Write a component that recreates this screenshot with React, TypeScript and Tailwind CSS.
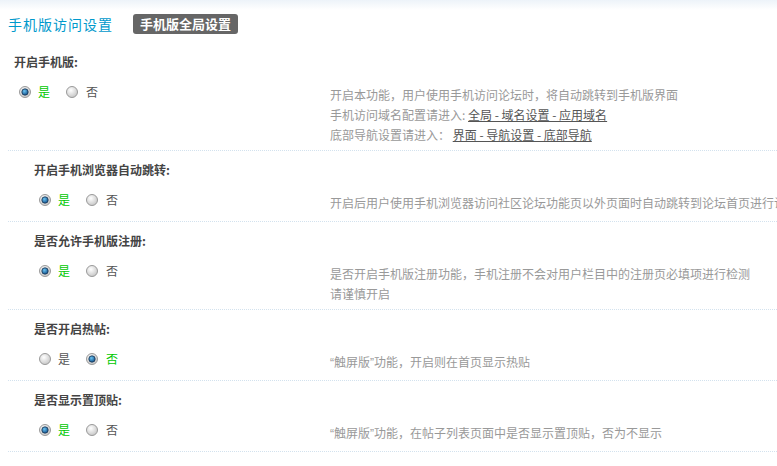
/* eslint-disable */
import React from 'react'

function Radio({ on }: { on: boolean }) {
  return (
    <svg width="12" height="12" viewBox="0 0 12 12" className="shrink-0">
      <defs>
        <radialGradient id="rg-off" cx="40%" cy="35%" r="70%">
          <stop offset="0%" stopColor="#ffffff" />
          <stop offset="100%" stopColor="#c4c4c4" />
        </radialGradient>
        <radialGradient id="rg-on" cx="40%" cy="35%" r="70%">
          <stop offset="0%" stopColor="#6cc4f2" />
          <stop offset="100%" stopColor="#0a4a86" />
        </radialGradient>
      </defs>
      <circle cx="6" cy="6" r="5.5" fill="url(#rg-off)" stroke="#9a9a9a" strokeWidth="1" />
      {on && <circle cx="6" cy="6" r="3.2" fill="url(#rg-on)" stroke="#1c3550" strokeWidth="0.8" />}
    </svg>
  )
}

function YesNo({ yes }: { yes: boolean }) {
  return (
    <div className="flex items-center h-[14px]">
      <Radio on={yes} />
      <span className={`ml-[7px] w-[12px] ${yes ? 'text-[#00c800]' : 'text-[#555]'}`}>是</span>
      <span className="ml-[16px]"><Radio on={!yes} /></span>
      <span className={`ml-[8px] ${!yes ? 'text-[#00c800]' : 'text-[#555]'}`}>否</span>
    </div>
  )
}

const L = ({ children }: { children: React.ReactNode }) => <a className="text-[#555] underline">{children}</a>
const Q = ({ children }: { children: React.ReactNode }) => <span className="font-['Liberation_Sans']">{children}</span>

const rows: { label: string; sub: boolean; yes: boolean; tips: React.ReactNode[] }[] = [
  {
    label: '开启手机版:', sub: false, yes: true,
    tips: [
      '开启本功能，用户使用手机访问论坛时，将自动跳转到手机版界面',
      <>手机访问域名配置请进入: <L>全局 - 域名设置 - 应用域名</L></>,
      <>底部导航设置请进入： <L>界面 - 导航设置 - 底部导航</L></>,
    ],
  },
  { label: '开启手机浏览器自动跳转:', sub: true, yes: true, tips: ['开启后用户使用手机浏览器访问社区论坛功能页以外页面时自动跳转到论坛首页进行访问'] },
  { label: '是否允许手机版注册:', sub: true, yes: true, tips: ['是否开启手机版注册功能，手机注册不会对用户栏目中的注册页必填项进行检测', '请谨慎开启'] },
  { label: '是否开启热帖:', sub: true, yes: false, tips: [<><Q>“</Q>触屏版<Q>”</Q>功能，开启则在首页显示热贴</>] },
  { label: '是否显示置顶贴:', sub: true, yes: true, tips: [<><Q>“</Q>触屏版<Q>”</Q>功能，在帖子列表页面中是否显示置顶贴，否为不显示</>] },
]

export default function App() {
  return (
    <div className="w-[777px] h-[466px] overflow-hidden bg-white text-[12px] text-[#444] bg-gradient-to-b from-[#edf3f9] to-white to-[10px]" style={{ fontFamily: '"Noto Sans CJK SC", "Liberation Sans", sans-serif' }}>
      <div className="pl-[8px]">
        <div className="h-[44px] pt-[14px] flex items-start">
          <h3 className="text-[14px] leading-[20px] text-[#0099cc] tracking-[1px]">手机版访问设置</h3>
          <span className="ml-[20px] h-[20px] px-[7px] rounded-[3px] bg-[#666] text-white font-bold text-[13px] leading-[20px]">手机版全局设置</span>
        </div>
        {rows.map((r, i) => (
          <div key={i} className="border-b border-dotted border-[#d3e2ee]">
            <div className={`${i === 0 ? 'pt-[7px]' : 'pt-[8px]'} leading-[22px] font-bold ${r.sub ? 'pl-[26px]' : 'pl-[6px]'}`}>{r.label}</div>
            <div className="flex">
              <div className={`w-[322px] shrink-0 pt-[12px] pb-[14px] ${r.sub ? 'pl-[31px]' : 'pl-[11px]'}`}>
                <YesNo yes={r.yes} />
              </div>
              <div className="pt-[12px] pb-[5px] leading-[20px] text-[#999] whitespace-nowrap">
                {r.tips.map((t, j) => <div key={j}>{t}</div>)}
              </div>
            </div>
          </div>
        ))}
      </div>
    </div>
  )
}
